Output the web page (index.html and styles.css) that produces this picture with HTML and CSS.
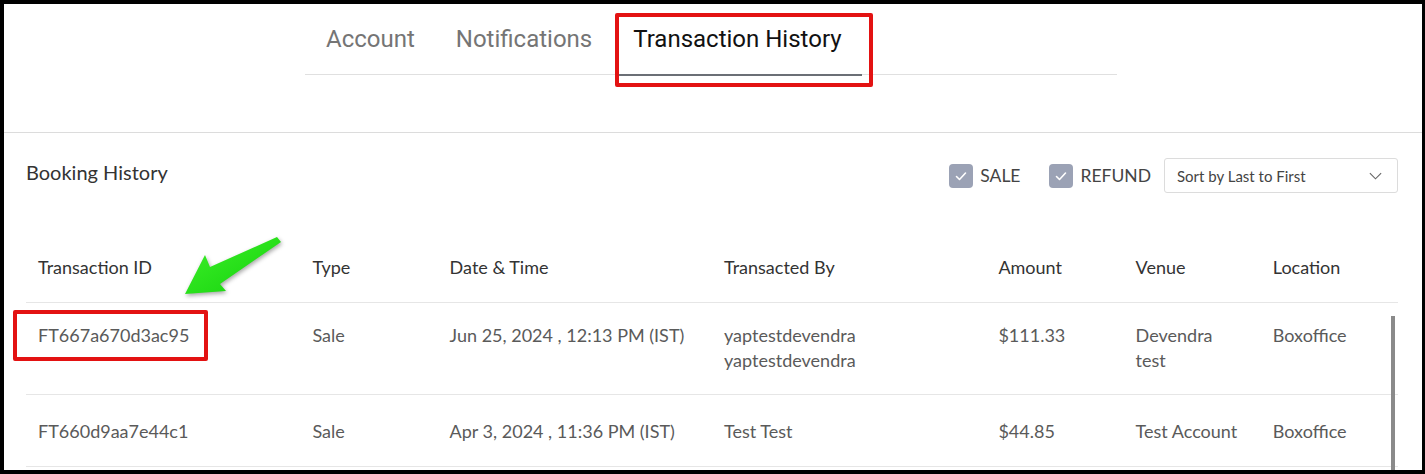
FILE: index.html
```html
<!DOCTYPE html>
<html lang="en">
<head>
    <meta charset="UTF-8">
    <meta name="viewport" content="width=device-width, initial-scale=1.0">
    <title>Transaction History</title>
    <link rel="stylesheet" href="styles.css">
</head>
<body>
<div class="screen">
    <nav class="tabs">
        <a class="tab">Account</a>
        <a class="tab">Notifications</a>
        <a class="tab active">Transaction History</a>
    </nav>

    <section class="booking">
        <div class="booking-head">
            <h2>Booking History</h2>
            <div class="filters">
                <label class="check">
                    <span class="box"><svg viewBox="0 0 24 24"><path d="M7.5 12.5l3 3 6-6.5"/></svg></span>
                    SALE
                </label>
                <label class="check">
                    <span class="box"><svg viewBox="0 0 24 24"><path d="M7.5 12.5l3 3 6-6.5"/></svg></span>
                    REFUND
                </label>
                <div class="select">
                    <span>Sort by Last to First</span>
                    <svg viewBox="0 0 16 16"><path d="M2 5.5l6 6 6-6"/></svg>
                </div>
            </div>
        </div>

        <div class="table">
            <div class="row head">
                <div class="cell">Transaction ID</div>
                <div class="cell">Type</div>
                <div class="cell">Date &amp; Time</div>
                <div class="cell">Transacted By</div>
                <div class="cell">Amount</div>
                <div class="cell">Venue</div>
                <div class="cell">Location</div>
            </div>
            <div class="rows">
                <div class="row">
                    <div class="cell">FT667a670d3ac95</div>
                    <div class="cell">Sale</div>
                    <div class="cell">Jun 25, 2024 , 12:13 PM (IST)</div>
                    <div class="cell">yaptestdevendra yaptestdevendra</div>
                    <div class="cell">$111.33</div>
                    <div class="cell">Devendra<br>test</div>
                    <div class="cell">Boxoffice</div>
                </div>
                <div class="row">
                    <div class="cell">FT660d9aa7e44c1</div>
                    <div class="cell">Sale</div>
                    <div class="cell">Apr 3, 2024 , 11:36 PM (IST)</div>
                    <div class="cell">Test Test</div>
                    <div class="cell">$44.85</div>
                    <div class="cell">Test Account</div>
                    <div class="cell">Boxoffice</div>
                </div>
                <span class="scroll-thumb"></span>
            </div>
        </div>
    </section>

    <!-- callouts -->
    <span class="mark mark-tab"></span>
    <span class="mark mark-id"></span>
    <svg class="arrow" viewBox="0 0 110 70" width="110" height="70">
        <defs>
            <linearGradient id="green" x1="0" y1="0" x2="1" y2="1">
                <stop offset="0" stop-color="#3ef02a"/>
                <stop offset="1" stop-color="#14d10c"/>
            </linearGradient>
        </defs>
        <polygon points="7,60 27,21 32,33 99,3 103,8 42,50 48,57" fill="url(#green)"/>
    </svg>
</div>
</body>
</html>
```

FILE: styles.css
```css
body {
    margin: 0;
    background: #000;
    font-family: Lato, "Open Sans", sans-serif;
    color: #333;
}

.screen {
    position: relative;
    margin: 4px 0 0 4px;
    width: 1418px;
    height: 466px;
    background: #fff;
    overflow: hidden;
}

/* tabs */

.tabs {
    display: flex;
    width: 812px;
    margin: 0 0 57px 301px;
    border-bottom: 1px solid #e0e0e0;
    font-family: Roboto, sans-serif;
}

.tab {
    position: relative;
    padding: 22px 20px 22px 21px;
    font-size: 24px;
    line-height: 26px;
    color: #757575;
}

.tab.active {
    color: #111;
    padding-left: 21px;
}

.tab.active::after {
    content: "";
    position: absolute;
    left: 5px;
    right: 0;
    bottom: -2px;
    height: 2px;
    background: #6b6f76;
}

/* booking history */

.booking {
    border-top: 1px solid #dcdcdc;
    padding: 25px 24px 0 22px;
}

.booking-head {
    display: flex;
    align-items: center;
    justify-content: space-between;
}

.booking-head h2 {
    margin: 0 0 8px;
    font-size: 20px;
    font-weight: 400;
    color: #333;
}

.filters {
    display: flex;
    align-items: center;
}

.check {
    display: flex;
    align-items: center;
    gap: 7px;
    margin-right: 29px;
    font-size: 17.5px;
    color: #444;
}

.check:nth-child(2) {
    margin-right: 13px;
}

.box {
    width: 24px;
    height: 24px;
    border-radius: 4px;
    background: #9ba2b5;
    display: flex;
}

.box svg {
    width: 24px;
    height: 24px;
    fill: none;
    stroke: #fff;
    stroke-width: 1.6;
    stroke-linecap: round;
    stroke-linejoin: round;
}

.select {
    width: 234px;
    height: 35px;
    box-sizing: border-box;
    border: 1px solid #dcdcdc;
    border-radius: 3px;
    display: flex;
    align-items: center;
    justify-content: space-between;
    padding: 0 14px 0 12px;
    font-size: 15px;
    color: #444;
}

.select svg {
    width: 15px;
    height: 15px;
    fill: none;
    stroke: #666;
    stroke-width: 1.2;
}

/* table */

.table {
    margin-top: 38px;
}

.row {
    display: grid;
    grid-template-columns: 2fr 1fr 2fr 2fr 1fr 1fr 1fr;
    min-height: 72px;
    border-bottom: 1px solid #e6e6e6;
    box-sizing: border-box;
}

.cell {
    padding: 20px 12px 21px;
    font-size: 18px;
    line-height: 25px;
    color: #5a5a5a;
}

.row + .row .cell {
    padding-top: 24px;
}

.row.head .cell {
    padding: 24px 12px 22px;
    line-height: 25px;
    color: #333;
}

.rows {
    position: relative;
}

.scroll-thumb {
    position: absolute;
    right: 3px;
    top: 13px;
    bottom: -10px;
    width: 4px;
    background: #8a8a8a;
}

/* callouts */

.mark {
    position: absolute;
    border: 4px solid #e31212;
    border-radius: 2px;
    box-sizing: border-box;
}

.mark-tab {
    left: 611px;
    top: 9px;
    width: 258px;
    height: 74px;
}

.mark-id {
    left: 9px;
    top: 306px;
    width: 195px;
    height: 51px;
}

.arrow {
    position: absolute;
    left: 174px;
    top: 230px;
    filter: drop-shadow(1px 2px 2px rgba(0, 0, 0, 0.35));
}
```
